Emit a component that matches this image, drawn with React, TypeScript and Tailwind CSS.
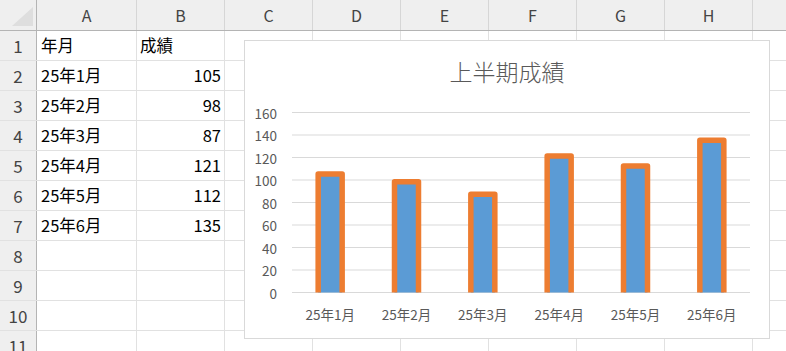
import React from "react";

const cols = ["A", "B", "C", "D", "E", "F", "G", "H"];
const data: [string, number][] = [
  ["25年1月", 105],
  ["25年2月", 98],
  ["25年3月", 87],
  ["25年4月", 121],
  ["25年5月", 112],
  ["25年6月", 135],
];

const colW = ["w-[100px]", "w-[88px]", "w-[88px]", "w-[88px]", "w-[88px]", "w-[88px]", "w-[88px]", "w-[88px]"];

function Chart() {
  const ticks = [160, 140, 120, 100, 80, 60, 40, 20, 0];
  const y0 = 251;
  const k = 1.125;
  const x0 = 47;
  const cw = (505 - 47) / 6;
  return (
    <div className="absolute left-[244px] top-[40px] w-[526px] h-[299px] border border-[#d9d9d9] bg-white">
      <div className="absolute left-0 right-0 top-[13px] text-center text-[23px] leading-[34px] font-light text-[#595959]">
        上半期成績
      </div>
      <svg width="524" height="297" className="absolute left-0 top-0" style={{ fontFamily: '"Noto Sans CJK JP", "Noto Sans", sans-serif' }}>
        <defs>
          <clipPath id="plot">
            <rect x="0" y="0" width="524" height={y0 + 0.5} />
          </clipPath>
        </defs>
        {ticks.map((t) => {
          const y = y0 - k * t + 0.5;
          return (
            <g key={t}>
              <line x1={x0} x2={505} y1={y} y2={y} stroke="#d9d9d9" strokeWidth="1" />
              <text x="32" y={y} textAnchor="end" dominantBaseline="central" fontSize="13.5" fill="#595959">
                {t}
              </text>
            </g>
          );
        })}
        <g clipPath="url(#plot)">
          {data.map(([, v], i) => {
            const cx = x0 + cw * (i + 0.5);
            const top = y0 - k * v;
            return (
              <rect
                key={i}
                x={cx - 12}
                y={top}
                width={24}
                height={y0 - top + 4}
                fill="#5b9bd5"
                stroke="#ed7d31"
                strokeWidth="5.5"
                strokeLinejoin="round"
              />
            );
          })}
        </g>
        {data.map(([m], i) => {
          const cx = x0 + cw * (i + 0.5);
          return (
            <text key={m} x={cx} y={273} textAnchor="middle" dominantBaseline="central" fontSize="13.5" fill="#595959">
              {m}
            </text>
          );
        })}
      </svg>
    </div>
  );
}

export default function App() {
  const rows = Array.from({ length: 11 }, (_, i) => i + 1);
  return (
    <div
      className="relative w-[786px] h-[351px] overflow-hidden bg-white"
      style={{ fontFamily: '"Noto Sans CJK JP", "Noto Sans", sans-serif' }}
    >
      {/* column header */}
      <div className="flex h-[31px] bg-[#efefef] border-b border-[#b4b4b4]">
        <div className="w-[37px] shrink-0 border-r border-[#b4b4b4] flex items-center justify-center">
          <svg width="36" height="30">
            <polygon points="12,26 33,26 33,7" fill="#dedede" />
          </svg>
        </div>
        {cols.map((c, i) => (
          <div
            key={c}
            className={`${colW[i]} shrink-0 border-r border-[#d6d6d6] flex items-center justify-center text-[16px] text-[#444]`}
          >
            {c}
          </div>
        ))}
        <div className="flex-1" />
      </div>
      {rows.map((r) => {
        const d = r >= 2 && r <= 7 ? data[r - 2] : null;
        return (
          <div key={r} className="flex h-[30px] border-b border-[#e1e1e1]">
            <div className="w-[37px] shrink-0 bg-[#efefef] border-r border-[#b4b4b4] flex items-center justify-center text-[17px] text-[#444]">
              {r}
            </div>
            <div className="w-[100px] shrink-0 border-r border-[#e1e1e1] flex items-center pl-[4px] text-[16.5px] text-black">
              {r === 1 ? "年月" : d ? d[0] : ""}
            </div>
            <div className="w-[88px] shrink-0 border-r border-[#e1e1e1] flex items-center text-[16.5px] text-black">
              {r === 1 ? (
                <span className="pl-[3px]">成績</span>
              ) : d ? (
                <span className="ml-auto pr-[3px]">{d[1]}</span>
              ) : null}
            </div>
            {cols.slice(2).map((c) => (
              <div key={c} className="w-[88px] shrink-0 border-r border-[#e1e1e1]" />
            ))}
            <div className="flex-1" />
          </div>
        );
      })}
      <Chart />
    </div>
  );
}
